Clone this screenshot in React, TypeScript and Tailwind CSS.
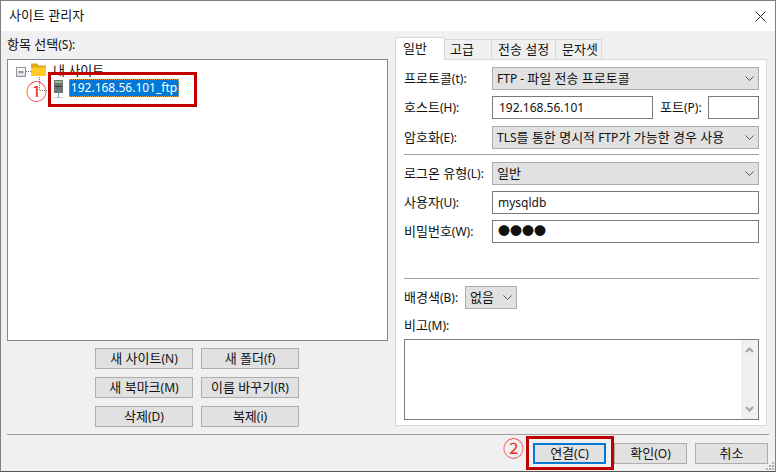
import React from "react";

const hangulRun = /([\uAC00-\uD7A3]+(?: [\uAC00-\uD7A3]+)*)/;

function T({ text }: { text: string }) {
  return (
    <>
      {text.split(hangulRun).map((part, i) =>
        i % 2 === 1 ? (
          <span key={i} className="text-[13px]">{part}</span>
        ) : (
          <span key={i}>{part}</span>
        )
      )}
    </>
  );
}

const Chevron = () => (
  <svg width="9" height="5" viewBox="0 0 9 5" className="shrink-0">
    <path d="M0.5 0.5l4 4 4-4" fill="none" stroke="#555" strokeWidth="1" />
  </svg>
);

function Select({ text, cls }: { text: string; cls: string }) {
  return (
    <div className={`flex items-center justify-between h-[23px] bg-[#e1e1e1] border border-[#adadad] pl-[4px] pr-[4px] text-[12px] text-[#111] ${cls}`}>
      <span className="whitespace-nowrap"><T text={text} /></span>
      <Chevron />
    </div>
  );
}

function Input({ text, cls }: { text?: string; cls: string }) {
  return (
    <div className={`flex items-center h-[23px] bg-white border border-[#7a7a7a] pl-[5px] text-[12px] text-[#111] ${cls}`}>
      {text}
    </div>
  );
}

function Btn({ text, cls = "" }: { text: string; cls?: string }) {
  return (
    <div className={`flex items-center justify-center h-[21px] bg-[#e1e1e1] border border-[#adadad] text-[12px] text-[#111] whitespace-nowrap ${cls}`}>
      <span><T text={text} /></span>
    </div>
  );
}

function Row({ label, children, cls = "" }: { label: string; children: React.ReactNode; cls?: string }) {
  return (
    <div className={`flex items-center ${cls}`}>
      <span className="w-[88px] shrink-0 text-[12px] text-[#111] whitespace-nowrap"><T text={label} /></span>
      {children}
    </div>
  );
}

function Tab({ text, cls }: { text: string; cls: string }) {
  return (
    <div className={`flex items-center whitespace-nowrap text-[12px] text-[#111] border-t border-r border-[#d9d9d9] bg-[#f0f0f0] h-[20px] ${cls}`}>
      <T text={text} />
    </div>
  );
}

export default function App() {
  return (
    <div className="relative w-[776px] h-[472px] flex flex-col overflow-hidden bg-[#f0f0f0] border border-[#808080] border-b-[#555] font-['Noto_Sans','Noto_Sans_CJK_KR',sans-serif]">
      <header className="h-[30px] shrink-0 bg-white flex items-center justify-between pl-[8px] pr-[9px] text-[12px] text-[#111]">
        <span><T text="사이트 관리자" /></span>
        <svg width="11" height="11" viewBox="0 0 11 11">
          <path d="M0.5 0.5l10 10M10.5 0.5l-10 10" stroke="#222" strokeWidth="1" fill="none" />
        </svg>
      </header>

      <main className="flex h-[403px] shrink-0 pl-[6px]">
        <section className="w-[381px] shrink-0 flex flex-col">
          <div className="h-[28px] flex items-center text-[12px] text-[#111]"><span><T text="항목 선택(S):" /></span></div>
          <div className="relative h-[282px] bg-white border border-[#828790]">
            <svg width="60" height="50" viewBox="0 0 60 50" className="absolute left-0 top-0">
              <defs>
                <linearGradient id="bx" x1="0" y1="0" x2="0" y2="1">
                  <stop offset="0" stopColor="#ffffff" />
                  <stop offset="1" stopColor="#d5d8de" />
                </linearGradient>
              </defs>
              <rect x="8.5" y="7.5" width="9" height="9" fill="url(#bx)" stroke="#8f9499" />
              <path d="M10.5 12h5" stroke="#3b4a63" />
              <path d="M18 11.5h5" stroke="#777" strokeDasharray="1 1" />
              <path d="M31.5 17v13.5h11" stroke="#777" strokeDasharray="1 1" fill="none" />
              <path d="M23 3.5h6l2 2h7v4H23z" fill="#dfa61b" />
              <path d="M23 7.5h15v8.5H23z" fill="#ffc929" />
              <rect x="46" y="20" width="9" height="13" fill="#6d7572" />
              <rect x="47" y="21" width="7" height="2" fill="#8fbf8f" />
              <rect x="47" y="26" width="7" height="1" fill="#3c3c3c" />
              <path d="M50.5 33v4" stroke="#7f9db8" />
              <path d="M46 37.5h9" stroke="#c9c9c9" />
            </svg>
            <span className="absolute left-[45px] top-[1px] text-[12px] text-[#111]"><T text="내 사이트" /></span>
            <span className="absolute left-[61px] top-[19px] h-[18px] w-[110px] flex items-center justify-center bg-[#0078d7] text-white text-[12px] outline-1 outline-dotted outline-[#e8a040] -outline-offset-1 whitespace-nowrap">
              192.168.56.101_ftp
            </span>
          </div>
          <div className="grid grid-cols-[98px_98px] gap-x-[8px] gap-y-[8px] mt-[7px] ml-[88px]">
            <Btn text="새 사이트(N)" />
            <Btn text="새 폴더(f)" />
            <Btn text="새 북마크(M)" />
            <Btn text="이름 바꾸기(R)" />
            <Btn text="삭제(D)" />
            <Btn text="복제(i)" />
          </div>
        </section>

        <section className="w-[372px] ml-[7px] shrink-0 flex flex-col pt-[6px]">
          <div className="flex items-end h-[22px]">
            <div className="relative z-10 flex items-center pl-[7px] w-[50px] h-[23px] -mb-[1px] bg-white border-x border-t border-[#d9d9d9] text-[12px] text-[#111]"><T text="일반" /></div>
            <Tab text="고급" cls="w-[47px] pl-[5px]" />
            <Tab text="전송 설정" cls="w-[64px] pl-[6px]" />
            <Tab text="문자셋" cls="w-[46px] pl-[6px]" />
          </div>
          <div className="h-[367px] bg-white border border-[#d9d9d9] pl-[8px] pr-[7px] pt-[7px] flex flex-col">
            <Row label="프로토콜(t):">
              <Select text="FTP - 파일 전송 프로토콜" cls="w-[267px]" />
            </Row>
            <Row label="호스트(H):" cls="mt-[6px]">
              <Input text="192.168.56.101" cls="w-[161px] pl-[6px]" />
              <span className="w-[55px] pl-[7px] text-[12px] text-[#111] whitespace-nowrap"><T text="포트(P):" /></span>
              <Input cls="w-[51px]" />
            </Row>
            <Row label="암호화(E):" cls="mt-[7px]">
              <Select text="TLS를 통한 명시적 FTP가 가능한 경우 사용" cls="w-[267px]" />
            </Row>
            <div className="h-px bg-[#a0a0a0] mt-[5px]" />
            <Row label="로그온 유형(L):" cls="mt-[7px]">
              <Select text="일반" cls="w-[267px]" />
            </Row>
            <Row label="사용자(U):" cls="mt-[6px]">
              <Input text="mysqldb" cls="w-[267px]" />
            </Row>
            <Row label="비밀번호(W):" cls="mt-[6px]">
              <Input text="●●●●" cls="w-[267px]" />
            </Row>
            <div className="h-px bg-[#a0a0a0] mt-[35px]" />
            <div className="flex items-center mt-[7px]">
              <span className="w-[61px] shrink-0 text-[12px] text-[#111] whitespace-nowrap"><T text="배경색(B):" /></span>
              <Select text="없음" cls="w-[52px]" />
            </div>
            <div className="mt-[5px] h-[23px] flex items-center text-[12px] text-[#111]"><span><T text="비고(M):" /></span></div>
            <div className="mt-[2px] h-[81px] w-[355px] bg-white border border-[#7a7a7a] flex justify-end">
              <div className="w-[17px] h-full bg-[#f0f0f0] flex flex-col items-center justify-between py-[7px]">
                <svg width="9" height="6" viewBox="0 0 9 6"><path d="M1 5l3.5-3.5L8 5" fill="none" stroke="#a3a3a3" strokeWidth="2" /></svg>
                <svg width="9" height="6" viewBox="0 0 9 6"><path d="M1 1l3.5 3.5L8 1" fill="none" stroke="#a3a3a3" strokeWidth="2" /></svg>
              </div>
            </div>
          </div>
        </section>
      </main>

      <div className="h-px bg-[#a0a0a0] mx-[6px]" />
      <footer className="flex justify-end gap-[8px] pr-[7px] pt-[8px]">
        <Btn text="연결(C)" cls="w-[73px] !border-2 !border-[#0078d7]" />
        <Btn text="확인(O)" cls="w-[73px]" />
        <Btn text="취소" cls="w-[73px]" />
      </footer>

      <svg width="10" height="10" viewBox="0 0 10 10" className="absolute right-[0px] bottom-[0px]">
        <path d="M7 1h2v2H7zM4 4h2v2H4zM7 4h2v2H7zM1 7h2v2H1zM4 7h2v2H4zM7 7h2v2H7z" fill="#b0b0b0" />
      </svg>

      <div className="absolute left-[47px] top-[71px] w-[149px] h-[35px] border-[3px] border-[#c00000]" />
      <span className="absolute left-[25px] top-[77px] text-[21px] leading-[24px] text-[#f03030] font-['Noto_Sans_CJK_KR',sans-serif]">①</span>
      <div className="absolute left-[525px] top-[435px] w-[88px] h-[34px] border-[3px] border-[#c00000]" />
      <span className="absolute left-[502px] top-[434px] text-[21px] leading-[24px] text-[#f03030] font-['Noto_Sans_CJK_KR',sans-serif]">②</span>
    </div>
  );
}
